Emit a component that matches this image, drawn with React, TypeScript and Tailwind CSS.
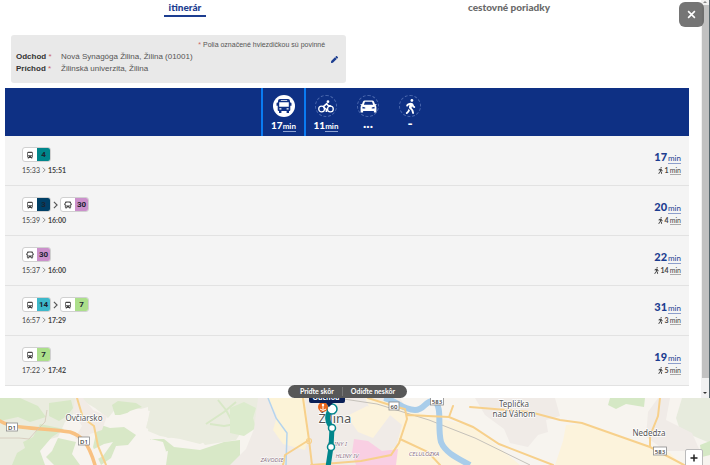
import { useState } from "react";
import { FaWalking, FaPen } from "react-icons/fa";

type Line = { vehicle: "bus" | "trolley"; name: string; color: string };

type Trip = {
  id: number;
  lines: Line[];
  from: string;
  to: string;
  minutes: number;
  walk: number;
};

const trips: Trip[] = [
  { id: 1, lines: [{ vehicle: "trolley", name: "4", color: "bg-[#00868b]" }], from: "15:33", to: "15:51", minutes: 17, walk: 1 },
  {
    id: 2,
    lines: [
      { vehicle: "trolley", name: "3", color: "bg-[#003f66]" },
      { vehicle: "bus", name: "30", color: "bg-[#cb90cb]" },
    ],
    from: "15:39",
    to: "16:00",
    minutes: 20,
    walk: 4,
  },
  { id: 3, lines: [{ vehicle: "bus", name: "30", color: "bg-[#cb90cb]" }], from: "15:37", to: "16:00", minutes: 22, walk: 14 },
  {
    id: 4,
    lines: [
      { vehicle: "trolley", name: "14", color: "bg-[#3db8ca]" },
      { vehicle: "trolley", name: "7", color: "bg-[#acdf8b]" },
    ],
    from: "16:57",
    to: "17:29",
    minutes: 31,
    walk: 3,
  },
  { id: 5, lines: [{ vehicle: "trolley", name: "7", color: "bg-[#acdf8b]" }], from: "17:22", to: "17:42", minutes: 19, walk: 5 },
];

const BusIcon = ({ className }: { className?: string }) => (
  <svg viewBox="0 0 16 16" className={className} fill="currentColor">
    <path
      fillRule="evenodd"
      d="M4 1h8a2 2 0 0 1 2 2v1.500h.6c.5 0 .9.4.9.9v2.400h-1.200V12a1 1 0 0 1-1 1H13v2h-2.400v-2H5.400v2H3v-2h-.3a1 1 0 0 1-1-1V7.800H.5V5.400c0-.5.4-.9.9-.9H2V3a2 2 0 0 1 2-2zm.8 1.200v.9h6.400v-.9zM3.200 4.200v4.600h9.600V4.200zM3.400 10.200v1.400h2v-1.400zm7.200 0v1.400h2v-1.400z"
    />
  </svg>
);

const TrolleyIcon = ({ className }: { className?: string }) => (
  <svg viewBox="0 0 16 16" className={className} fill="currentColor">
    <path
      fillRule="evenodd"
      d="M4.500 1.500h7A2 2 0 0 1 13.500 3.500v9h-1V15h-2l-.4-1.200H5.900L5.500 15h-2v-2.500h-1v-9a2 2 0 0 1 2-2zM4 4v4.500h8V4zM4.200 10v1.500h1.800V10zm5.800 0v1.500h1.800V10z"
    />
  </svg>
);

const BikeIcon = ({ className }: { className?: string }) => (
  <svg viewBox="0 0 20 16" className={className} fill="none" stroke="currentColor" strokeWidth="1.600">
    <circle cx="4.500" cy="11.200" r="3.600" />
    <circle cx="15.500" cy="11.200" r="3.600" />
    <path d="M7.500 9.500 10.500 11.500V15M7.500 9.500 7 7.800 11 4.500l2 2.700h3" strokeWidth="2" strokeLinejoin="round" />
    <circle cx="12.500" cy="2" r="1.700" fill="currentColor" stroke="none" />
  </svg>
);

const CarIcon = ({ className }: { className?: string }) => (
  <svg viewBox="0 0 18 14" className={className} fill="currentColor">
    <path
      fillRule="evenodd"
      d="M5 .5h8c.9 0 1.500.4 1.900 1.200L16 4.500l1.500-.3v1.300l-.8.3c.5.5.8 1.100.8 1.900v5.800h-2.700v-1.700H3.200v1.700H.5V7.700c0-.8.3-1.400.8-1.900l-.8-.3V4.200l1.500.3 1.100-2.800C3.500.9 4.100.5 5 .5zM5.200 2 4 5.200h10L12.800 2zM2.500 7.200v1.900h3V8zm13 0-3 .8v1.100h3z"
    />
  </svg>
);

const Chevron = ({ className }: { className?: string }) => (
  <svg viewBox="0 0 6 10" className={className} fill="none" stroke="currentColor" strokeWidth="1.400">
    <path d="M1 1l4 4-4 4" />
  </svg>
);

const modes = [
  { id: "transit", label: "MHD", icon: BusIcon, iconSize: "size-4", time: "17" },
  { id: "bike", label: "Bicykel", icon: BikeIcon, iconSize: "w-4 h-[13px]", time: "11" },
  { id: "car", label: "Auto", icon: CarIcon, iconSize: "w-[17px] h-[13px]", time: "..." },
  { id: "walk", label: "Pešo", icon: FaWalking, iconSize: "size-[15px]", time: "-" },
];

const LineBadge = ({ line }: { line: Line }) => (
  <span className="flex h-[15px] w-[29px] rounded-[3px] border border-[#d0d0d0] bg-white">
    <span className="flex w-3.5 items-center justify-center text-[#444]">
      {line.vehicle === "bus" ? <BusIcon className="size-2" /> : <TrolleyIcon className="size-2" />}
    </span>
    <span
      className={`flex flex-1 items-center justify-center rounded-r-[2px] font-[Roboto,sans-serif] text-[8px] font-bold text-[#1c2430] ${line.color}`}
    >
      {line.name}
    </span>
  </span>
);

const TripRow = ({ trip }: { trip: Trip }) => (
  <li className="flex h-[50px] items-start justify-between border-b border-[#e2e2e2] bg-[#f4f4f4] pr-2 pl-[17px] pt-[11px]">
    <div>
      <div className="flex items-center">
        {trip.lines.map((line, i) => (
          <div key={line.name} className="flex items-center">
            {i > 0 && <Chevron className="mx-0.5 h-2 w-[5px] text-[#555]" />}
            <LineBadge line={line} />
          </div>
        ))}
      </div>
      <p className="mt-1 flex items-center gap-0.5 text-[7px] leading-2 text-[#444]">
        {trip.from}
        <Chevron className="h-1.5 w-1 text-[#777]" />
        <b>{trip.to}</b>
      </p>
    </div>
    <div className="pt-[3px] text-right">
      <p className="text-[11px] leading-[14px] font-black text-[#1c3d90]">
        {trip.minutes}
        <span className="ml-px border-b border-[#8c9dcb] text-[8px] font-normal">min</span>
      </p>
      <p className="flex items-center justify-end text-[7px] leading-[10px] font-bold text-[#444]">
        <FaWalking className="mr-px size-[7px]" />
        {trip.walk}
        <span className="ml-px border-b border-[#aaa] leading-2 font-normal">min</span>
      </p>
    </div>
  </li>
);

const RoadSign = ({ x, y, w, name }: { x: number; y: number; w: number; name: string }) => (
  <g>
    <rect x={x - w / 2} y={y - 4} width={w} height="8" fill="#fff" stroke="#8a8a8a" strokeWidth="0.8" />
    <text x={x} y={y + 2.5} textAnchor="middle" fontSize="6" fontWeight="500" fill="#333">
      {name}
    </text>
  </g>
);

const CityMap = () => (
  <svg viewBox="0 0 710 67" preserveAspectRatio="xMidYMin slice" className="absolute inset-0 size-full font-['Noto_Sans',sans-serif]">
    <rect width="710" height="67" fill="#f7f4ef" />
    {/* meadows */}
    <path d="M0 0H237V40L222 37 200 46 180 41 160 38 148 33 150 12 118 8 108 20 95 10 78 0 75 14 65 24 58 39 30 46 15 67H0z" fill="#eaecdf" />
    <path d="M130 0H285L270 12 262 24 240 36 236 42 205 47 196 36 168 40 146 30 150 13 128 8z" fill="#eaecdf" />
    <path d="M682 0h28v45l-12-5-18-8-4-12z" fill="#e7ebdd" />
    {/* forests */}
    <path d="M0 0h20l18 8 8 11-16 5-12-5-18 4zM49 5l22-3 2 8-6 8-8 5-10-5zM40 26l24 5-12 8-12 14 5 14H12l5-12 8-5-2-6 10-5zM58 40l18 4-4 12 8 11H54l-8-8 6-6zM98 26l12 4 14-1 12 8-8 10-12 1-5 12-10 7-8-18zM112 7l6-4 18 2 6 4-12 4-5 4-10 0zM150 41l14 0 10 8 26 3 24-8 16-2v25h-74l2-14-12 2z" fill="#d8e8c7" />
    <path d="M610 0h35l-1 9-18-3-10 5-8-4zM700 47l10-4v14l-8 2z" fill="#d5e8c5" />
    <path d="M206 26l18-12 12-10M218 2l8 10 7 13M210 26l14 2 12-2" fill="none" stroke="#d8e8c7" strokeWidth="2" />
    <path d="M137 55l14-14 12 3 3 9-10 14h-16zM90 53l14-7 9-2-10 14-7 4 2 5h-15zM120 17l28-8v14l-18 5-16-4z" fill="#f7f4ef" />
    <path d="M230 10l14-6 12 6-3 10 3 10-12 8-14-3z" fill="#dcebcd" />
    {/* built-up areas */}
    <path d="M75 0h8l10 12 14 6-5 14-12 4-6 8-9-4 7-12-9-14z" fill="#f1ebe6" />
    <path d="M258 0h142l8 14 12 6-14 20-30 27H230l16-16 8-20zM475 0h80l5 18-14 4 2 12-10 3-10 12-18-4-6-14-19-14zM648 14l10-14h12l-4 22 26 13 8 18h-34l-20-14z" fill="#f0ebe7" />
    <path d="M268 0h37l4 38-4 14-22-6-10-14 4-14z" fill="#fcf3d7" />
    <path d="M365 0l25 4 17 8 63 16 20 14 30 25h-150l10-10 16-8 6-22-12-10-20-6zM566 27l16-1 88 29 12 12H555l8-24zM347 18l20-10 24 8-18 24-15-6z" fill="#fcf3dc" />
    <path d="M354 41l14 2 14 10 16-2-2 16h-40l-4-12z" fill="#f9cfe3" />
    {/* railways and river */}
    <path d="M337 0l40 6 52 16 46 18 55 27" fill="none" stroke="#c5c1ba" strokeWidth="1" />
    <path d="M384 0c12 2 18 12 31 12 10 0 10-10 19-9 9 5 3 26 7 41 4 10 14 15 29 23" fill="none" stroke="#a9cdea" strokeWidth="6" />
    <path d="M268 0l8 20 11 15-1 32" fill="none" stroke="#b4d4ee" strokeWidth="1.500" />
    {/* roads */}
    <g fill="none" stroke="#f7d08b" strokeLinecap="round">
      <path d="M0 23c15 9 40 6 70 11 12 4 18 10 25 33" stroke="#f8c182" strokeWidth="3.500" />
      <path d="M77 0l6 20 11 8 4 20 8 19" strokeWidth="2" />
      <path d="M470 9l60 5 30 8 22 3 68 24 34 18M660 0l-2 18-8 20v11" strokeWidth="2" />
      <path d="M368 0l22 7 15 4 2 10-8 24-8 12-30 6-50 4M303 0l6 42 3 25M309 42l-24 15-2 10M407 17l42 2 24 10 26 17 54 21M400 41l28 13 12 13M453 8l-4 11" strokeWidth="2" />
      <circle cx="309" cy="43" r="2.500" strokeWidth="1.200" />
    </g>
    <path d="M47 12l-2 12-8 8-8 9-10-1-19 0" fill="none" stroke="#d3c6b8" strokeWidth="0.800" />
    <RoadSign x={12} y={29} w={11} name="D1" />
    <RoadSign x={84} y={43} w={11} name="D1" />
    <RoadSign x={394} y={8} w={10} name="60" />
    <RoadSign x={437} y={3} w={13} name="583" />
    <RoadSign x={660} y={53} w={13} name="583" />
    <g fill="#555" fontSize="8" textAnchor="middle" stroke="#fff" strokeWidth="1.500" paintOrder="stroke" strokeLinejoin="round">
      <text x="84" y="23">Ovčiarsko</text>
      <text x="514" y="9">Teplička</text>
      <text x="514" y="19">nad Váhom</text>
      <text x="649" y="38">Nededza</text>
      <text x="335" y="25" fontSize="13">Žilina</text>
      <g fill="#8b7083" fontSize="6" fontStyle="italic" strokeWidth="1">
        <text x="272" y="64">ZÁVODIE</text>
        <text x="337" y="48">HLINY I</text>
        <text x="347" y="60">HLINY IV</text>
        <text x="424" y="58">CELULÓZKA</text>
      </g>
    </g>
    {/* route with stops */}
    <path d="M331 11c-5 6-4 13 1 19l-1 19-3 20" fill="none" stroke="#00868b" strokeWidth="5" />
    <g fill="#fff" stroke="#00868b" strokeWidth="1.500">
      <circle cx="332" cy="11" r="5" />
      <circle cx="332" cy="30" r="3.500" />
      <circle cx="331" cy="49" r="3.500" />
    </g>
    <circle cx="323" cy="9" r="5" fill="#e8641b" />
    <circle cx="323" cy="7" r="1.200" fill="#fff" />
    <path d="M320 11q3 3 6 0M323 8v4" fill="none" stroke="#fff" strokeWidth="1" />
    <path d="M309 0h36v3q0 2-2 2h-10l-4 4-3-4h-15q-2 0-2-2z" fill="#0a1f56" />
    <text x="326" y="2" textAnchor="middle" fontSize="7" fontWeight="bold" fill="#fff">
      Odchod
    </text>
  </svg>
);

export default function App() {
  const [mode, setMode] = useState("transit");

  return (
    <div className="flex min-h-screen flex-col overflow-hidden bg-white font-[Lato,sans-serif]">
      <section className="relative flex border-r border-[#55656b]">
        <div className="min-w-0 flex-1 pr-3 pb-3 pl-[5px]">
          <nav className="grid h-[35px] grid-cols-2 items-start px-[18px] text-center text-[10px] leading-[14px] font-black">
            <a href="#itinerar" className="justify-self-center border-b-2 border-[#1c3d90] px-[5px] pb-px text-[#1c3d90]">
              itinerár
            </a>
            <a href="#poriadky" className="justify-self-center text-[#6a6a6a]">
              cestovné poriadky
            </a>
          </nav>

          <div className="ml-1.5 flex h-12 w-[49%] items-center rounded-[3px] bg-[#e9e9e9] pr-2 pl-[5px] font-['Liberation_Sans',sans-serif] text-[8px] leading-3 text-[#555]">
            <div className="flex-1 pb-1">
              <p className="pr-1.5 text-right text-[7px]">
                <span className="text-[#c66]">*</span> Polia označené hviezdičkou sú povinné
              </p>
              <dl className="grid grid-cols-[45px_1fr]">
                <dt className="font-bold text-[#333]">
                  Odchod <span className="font-normal text-[#c66]">*</span>
                </dt>
                <dd>Nová Synagóga Žilina, Žilina (01001)</dd>
                <dt className="font-bold text-[#333]">
                  Príchod <span className="font-normal text-[#c66]">*</span>
                </dt>
                <dd>Žilinská univerzita, Žilina</dd>
              </dl>
            </div>
            <button aria-label="Upraviť" className="text-[#1c3d90]">
              <FaPen className="size-[7px]" />
            </button>
          </div>

          <div className="mt-[5px] flex h-12 justify-center bg-[#0e3084] text-white">
            {modes.map(({ id, label, icon: Icon, iconSize, time }) => (
              <button
                key={id}
                aria-label={label}
                onClick={() => setMode(id)}
                className={`flex flex-col items-center pt-[7px] ${
                  mode === id ? "-mr-px -ml-0.5 w-[45px] border-x-2 border-[#0a7bf2]" : "w-[42px]"
                }`}
              >
                <span
                  className={`flex size-[22px] items-center justify-center rounded-full ${
                    mode === id ? "bg-white text-[#0e3084]" : "border border-dashed border-[#4a67ad]"
                  }`}
                >
                  <Icon className={iconSize} />
                </span>
                {/^\d/.test(time) ? (
                  <span className="mt-0.5 text-[10px] leading-3 font-black">
                    {time}
                    <span className="border-b border-[#8fa3d2] text-[8px] font-bold">min</span>
                  </span>
                ) : (
                  <span className="text-sm leading-3 font-black">{time}</span>
                )}
              </button>
            ))}
          </div>

          <ul>
            {trips.map((trip) => (
              <TripRow key={trip.id} trip={trip} />
            ))}
          </ul>
        </div>

        {/* scrollbar */}
        <div className="flex w-2 flex-col items-center bg-[#f1f1f1]">
          <svg viewBox="0 0 8 5" className="h-[5px] w-2">
            <path d="M2 3l2-2 2 2z" fill="#888" />
          </svg>
          <div className="w-[7px] flex-1 bg-[#c1c1c1]" />
          <svg viewBox="0 0 8 20" className="h-5 w-2">
            <path d="M2 14h4l-2 2z" fill="#333" />
          </svg>
        </div>

        <button aria-label="Zavrieť" className="absolute top-0.5 right-[5px] flex size-[25px] items-center justify-center rounded-md bg-[#666]/90 text-white">
          <svg viewBox="0 0 8 8" className="size-[9px]" stroke="currentColor" strokeWidth="1.400">
            <path d="M1 1l6 6M7 1L1 7" />
          </svg>
        </button>

        <div className="absolute inset-x-0 bottom-0 flex justify-center pr-[14px]">
          <div className="flex h-[13px] items-center rounded-full bg-[#585858] px-3 text-[7px] leading-[9px] font-bold text-white">
            <button className="border-r border-[#777] pr-2">Príďte skôr</button>
            <button className="pl-2">Odíďte neskôr</button>
          </div>
        </div>
      </section>

      <section className="relative min-h-[67px] flex-1 overflow-hidden">
        <CityMap />
        <button
          aria-label="Priblížiť"
          className="absolute right-[7px] -bottom-1 flex h-5 w-[18px] items-start justify-center rounded-t-[2px] border border-[#bbb] bg-white pt-[3px] text-[#222]"
        >
          <svg viewBox="0 0 10 10" className="size-2.5" stroke="currentColor" strokeWidth="1.500">
            <path d="M5 1.500v7M1.500 5h7" />
          </svg>
        </button>
      </section>
    </div>
  );
}
